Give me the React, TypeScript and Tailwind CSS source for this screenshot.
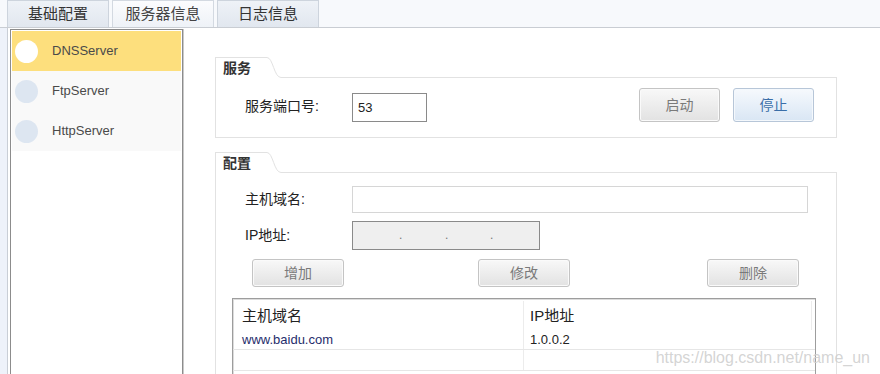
import React from 'react';

const font = "font-[family-name:'Liberation_Sans','Noto_Sans_CJK_SC',sans-serif]";

const servers = [
    { name: 'DNSServer', active: true },
    { name: 'FtpServer', active: false },
    { name: 'HttpServer', active: false },
];

const GroupHeader: React.FC<{ title: string }> = ({ title }) => (
    <div className="flex h-[21px]">
        <div className="w-[49px] border-t border-l border-[#e2e2e2] pl-[7px] text-[14px] leading-[21px] font-bold text-[#333]">
            {title}
        </div>
        <svg width="17" height="21" viewBox="0 0 17 21" className="block shrink-0">
            <path d="M0 0.5 L3 0.5 C9 0.5 10 20.5 17 20.5" fill="none" stroke="#e2e2e2" strokeWidth="1" />
        </svg>
        <div className="flex-1 border-b border-[#e2e2e2]" />
    </div>
);

const GrayButton: React.FC<{ label: string; w: string; h: string }> = ({ label, w, h }) => (
    <button
        className={`${w} ${h} rounded-[3px] border border-[#c4c4c4] bg-gradient-to-b from-[#f8f8f8] to-[#e2e2e2] text-[14px] text-[#7a7a7a] shadow-[inset_0_0_0_1px_#fafafa]`}
    >
        {label}
    </button>
);

export default function App() {
    return (
        <div className={`w-[880px] h-[374px] overflow-hidden relative bg-white ${font}`}>
            {/* tabs */}
            <div className="flex h-[28px] gap-[3px] pl-[7px] border-b border-[#c9cdd3] bg-[#f7f9fc]">
                <div className="w-[102px] border border-b-0 border-[#cdd4dd] bg-gradient-to-b from-[#eef2f7] to-[#e1e7ef] text-center text-[15px] leading-[26px] text-[#333]">
                    基础配置
                </div>
                <div className="w-[102px] border border-b-0 border-[#d3d9e1] bg-gradient-to-b from-[#fbfcfe] to-[#eef2f7] text-center text-[15px] leading-[26px] text-[#444]">
                    服务器信息
                </div>
                <div className="w-[102px] border border-b-0 border-[#cdd4dd] bg-gradient-to-b from-[#eef2f7] to-[#e1e7ef] text-center text-[15px] leading-[26px] text-[#333]">
                    日志信息
                </div>
            </div>

            <div className="flex h-[346px]">
                <div className="w-[8px] bg-[#eef2fa] border-r border-[#c9ced6]" />

                {/* server list */}
                <div className="w-[175px] pl-[2px] pt-[1px]">
                    <div className="h-[360px] w-[173px] border border-[#8c8c8c] p-[1px] shadow-[1px_0_0_#c9c9c9]">
                        {servers.map((s) => (
                            <div
                                key={s.name}
                                className={`flex items-center h-[40px] pl-[3px] ${s.active ? 'bg-[#fddf7d]' : 'bg-[#f9f9f9]'}`}
                            >
                                <div className={`w-[23px] h-[23px] rounded-full ${s.active ? 'bg-white' : 'bg-[#dde6f1]'}`} />
                                <span className="ml-[14px] text-[13px] text-[#4a4a4a]">{s.name}</span>
                            </div>
                        ))}
                    </div>
                </div>

                {/* main */}
                <div className="flex-1 pl-[32px] pt-[29px]">
                    <div className="w-[622px]">
                        <GroupHeader title="服务" />
                        <div className="flex items-start h-[60px] border-l border-r border-b border-[#e2e2e2]">
                            <span className="w-[136px] pl-[29px] mt-[18px] text-[14px] text-[#222]">服务端口号:</span>
                            <div className="mt-[15px] w-[75px] h-[29px] border border-[#8a8a8a] pl-[5px] text-[13px] leading-[27px] text-[#222]">
                                53
                            </div>
                            <div className="ml-auto mr-[22px] mt-[10px] flex gap-[13px]">
                                <GrayButton label="启动" w="w-[81px]" h="h-[34px]" />
                                <button className="w-[81px] h-[34px] rounded-[3px] border border-[#b7c6d8] bg-gradient-to-b from-[#f6f9fd] to-[#d9e6f4] text-[14px] text-[#3a6ea8] shadow-[inset_0_0_0_1px_#f4f8fc]">
                                    停止
                                </button>
                            </div>
                        </div>

                        <div className="h-[14px]" />

                        <GroupHeader title="配置" />
                        <div className="h-[220px] border-l border-r border-[#e2e2e2] pt-[13px]">
                            <div className="flex items-center h-[27px]">
                                <span className="w-[136px] pl-[29px] text-[14px] text-[#222]">主机域名:</span>
                                <div className="w-[456px] h-[27px] border border-[#d6d6d6]" />
                            </div>
                            <div className="flex items-center h-[29px] mt-[8px]">
                                <span className="w-[136px] pl-[29px] text-[14px] text-[#222]">IP地址:</span>
                                <div className="flex w-[188px] h-[29px] border border-[#8a8a8a] bg-[#efefef] pl-[46px] text-[12px] leading-[27px] text-[#777]">
                                    <span className="w-[46px]">.</span>
                                    <span className="w-[45px]">.</span>
                                    <span>.</span>
                                </div>
                            </div>
                            <div className="flex mt-[9px] pl-[36px]">
                                <GrayButton label="增加" w="w-[92px]" h="h-[28px]" />
                                <div className="ml-[134px]">
                                    <GrayButton label="修改" w="w-[92px]" h="h-[28px]" />
                                </div>
                                <div className="ml-[137px]">
                                    <GrayButton label="删除" w="w-[92px]" h="h-[28px]" />
                                </div>
                            </div>

                            {/* table */}
                            <div className="ml-[16px] mt-[11px] w-[584px] h-[120px] border-l border-t border-r border-[#9d9d9d] shadow-[inset_1px_1px_0_#dcdcdc]">
                                <div className="flex h-[31px] pt-[2px]">
                                    <div className="w-[291px] border-r border-[#ececec] pl-[9px] text-[15px] leading-[29px] text-[#222]">主机域名</div>
                                    <div className="w-[288px] border-r border-[#ececec] pl-[6px] text-[15px] leading-[29px] text-[#222]">IP地址</div>
                                    <div className="flex-1" />
                                </div>
                                <div className="flex h-[20px] border-b border-[#e6e6e6]">
                                    <div className="w-[291px] border-r border-[#ececec] pl-[9px] text-[13px] leading-[20px] text-[#1f2d6b]">www.baidu.com</div>
                                    <div className="w-[288px] pl-[6px] text-[13px] leading-[20px] text-[#222]">1.0.0.2</div>
                                </div>
                                <div className="flex h-[21px] border-b border-[#e6e6e6]">
                                    <div className="w-[291px] border-r border-[#ececec]" />
                                    <div className="w-[288px]" />
                                </div>
                            </div>
                        </div>
                    </div>
                </div>
            </div>

            <div className="absolute right-[10px] top-[348px] text-[16px] leading-[20px] text-[#cfcfcf]/90">
                https://blog.csdn.net/name_un
            </div>
        </div>
    );
}
